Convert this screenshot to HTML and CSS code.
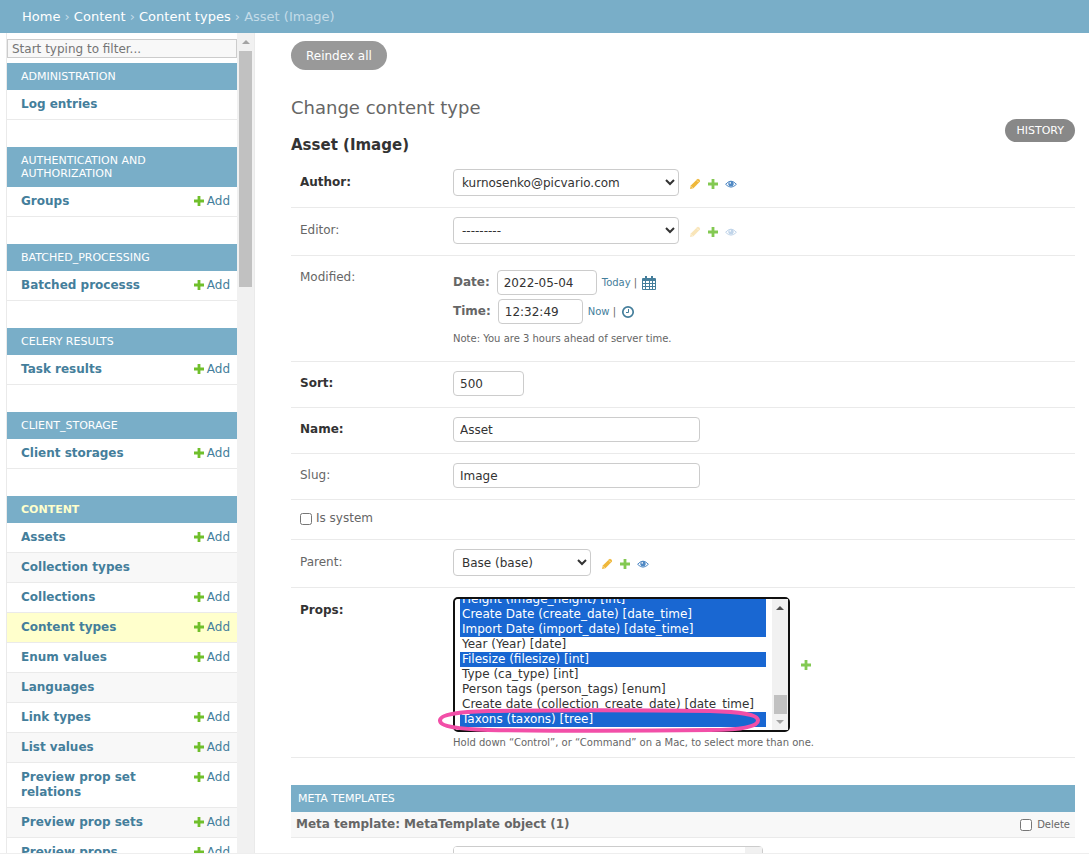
FILE: index.html
```html
<!DOCTYPE html>
<html lang="en">
<head>
    <meta charset="UTF-8">
    <meta name="viewport" content="width=device-width, initial-scale=1.0">
    <title>Asset (Image) | Change content type</title>
    <link rel="stylesheet" href="styles.css">
</head>
<body>
    <!-- Shared icons -->
    <svg class="sprite" aria-hidden="true">
        <symbol id="plus" viewBox="0 0 12 12"><path d="M4.600 1h2.800v3.600H11v2.800H7.400V11H4.600V7.400H1V4.600h3.600z"/></symbol>
        <symbol id="pencil" viewBox="0 0 12 12"><path d="M1 11l.8-3.400L8.200 1.200q.8-.7 1.600 0l1 1q.7.8 0 1.600L4.400 10.200z"/><path d="M2.200 8.400l1.400 1.400M8 2.500L9.600 4.100" stroke="#fff" stroke-width=".6"/></symbol>
        <symbol id="eye" viewBox="0 0 12 12"><path d="M.6 6.300Q6 0 11.400 6.300 6 12 .6 6.300z" fill="none" stroke="currentColor"/><circle cx="6" cy="5.800" r="2.700"/><circle cx="5.200" cy="4.900" r=".8" fill="#fff"/></symbol>
    </svg>

    <div class="breadcrumbs">
        <a href="#">Home</a> › <a href="#">Content</a> › <a href="#">Content types</a> › Asset (Image)
    </div>

    <div class="main">
        <div class="sidebar">
            <nav class="nav-list">
                <input type="search" class="nav-filter" placeholder="Start typing to filter..." aria-label="Filter navigation items">
                <div class="module">
                    <a class="caption" href="#">Administration</a>
                    <div class="row"><a class="model" href="#">Log entries</a></div>
                </div>
                <div class="module">
                    <a class="caption" href="#">Authentication and Authorization</a>
                    <div class="row"><a class="model" href="#">Groups</a><a class="add" href="#"><svg class="icon"><use href="#plus"/></svg>Add</a></div>
                </div>
                <div class="module">
                    <a class="caption" href="#">Batched_Processing</a>
                    <div class="row"><a class="model" href="#">Batched processs</a><a class="add" href="#"><svg class="icon"><use href="#plus"/></svg>Add</a></div>
                </div>
                <div class="module">
                    <a class="caption" href="#">Celery Results</a>
                    <div class="row"><a class="model" href="#">Task results</a><a class="add" href="#"><svg class="icon"><use href="#plus"/></svg>Add</a></div>
                </div>
                <div class="module">
                    <a class="caption" href="#">Client_Storage</a>
                    <div class="row"><a class="model" href="#">Client storages</a><a class="add" href="#"><svg class="icon"><use href="#plus"/></svg>Add</a></div>
                </div>
                <div class="module">
                    <a class="caption current-app" href="#">Content</a>
                    <div class="row"><a class="model" href="#">Assets</a><a class="add" href="#"><svg class="icon"><use href="#plus"/></svg>Add</a></div>
                    <div class="row alt"><a class="model" href="#">Collection types</a></div>
                    <div class="row"><a class="model" href="#">Collections</a><a class="add" href="#"><svg class="icon"><use href="#plus"/></svg>Add</a></div>
                    <div class="row current"><a class="model" href="#">Content types</a><a class="add" href="#"><svg class="icon"><use href="#plus"/></svg>Add</a></div>
                    <div class="row"><a class="model" href="#">Enum values</a><a class="add" href="#"><svg class="icon"><use href="#plus"/></svg>Add</a></div>
                    <div class="row alt"><a class="model" href="#">Languages</a></div>
                    <div class="row"><a class="model" href="#">Link types</a><a class="add" href="#"><svg class="icon"><use href="#plus"/></svg>Add</a></div>
                    <div class="row alt"><a class="model" href="#">List values</a><a class="add" href="#"><svg class="icon"><use href="#plus"/></svg>Add</a></div>
                    <div class="row"><a class="model" href="#">Preview prop set relations</a><a class="add" href="#"><svg class="icon"><use href="#plus"/></svg>Add</a></div>
                    <div class="row alt"><a class="model" href="#">Preview prop sets</a><a class="add" href="#"><svg class="icon"><use href="#plus"/></svg>Add</a></div>
                    <div class="row"><a class="model" href="#">Preview props</a><a class="add" href="#"><svg class="icon"><use href="#plus"/></svg>Add</a></div>
                </div>
            </nav>
            <div class="scrollbar">
                <span class="arrow-up"></span>
                <span class="thumb"></span>
            </div>
        </div>

        <div class="content">
            <button type="button" class="reindex">Reindex all</button>
            <h1>Change content type</h1>
            <div class="title-row">
                <h2>Asset (Image)</h2>
                <a class="history" href="#">History</a>
            </div>

            <form>
                <div class="form-row">
                    <label class="required" for="author">Author:</label>
                    <select id="author" class="wide"><option>kurnosenko@picvario.com</option></select>
                    <div class="related">
                        <a href="#" class="change" aria-label="Change author"><svg class="icon"><use href="#pencil"/></svg></a>
                        <a href="#" class="plus" aria-label="Add author"><svg class="icon"><use href="#plus"/></svg></a>
                        <a href="#" class="view" aria-label="View author"><svg class="icon"><use href="#eye"/></svg></a>
                    </div>
                </div>
                <div class="form-row">
                    <label for="editor">Editor:</label>
                    <select id="editor" class="wide"><option>---------</option></select>
                    <div class="related">
                        <a class="change disabled" aria-label="Change editor"><svg class="icon"><use href="#pencil"/></svg></a>
                        <a href="#" class="plus" aria-label="Add editor"><svg class="icon"><use href="#plus"/></svg></a>
                        <a class="view disabled" aria-label="View editor"><svg class="icon"><use href="#eye"/></svg></a>
                    </div>
                </div>
                <div class="form-row modified">
                    <span class="label">Modified:</span>
                    <div class="datetime">
                        <div class="line">
                            <label for="date">Date:</label>
                            <input type="text" id="date" class="date" value="2022-05-04">
                            <span class="shortcuts"><a href="#">Today</a> | </span>
                            <a href="#" aria-label="Choose a date"><svg class="picker" viewBox="0 0 14 14"><path fill="currentColor" fill-rule="evenodd" d="M1 2h2V0h2v2h4V0h2v2h2q1 0 1 1v10q0 1-1 1H1q-1 0-1-1V3q0-1 1-1zm0 3v2h2V5zm3 0v2h3V5zm4 0v2h2V5zm3 0v2h2V5zM1 8v2h2V8zm3 0v2h3V8zm4 0v2h2V8zm3 0v2h2V8zM1 11v2h2v-2zm3 0v2h3v-2zm4 0v2h2v-2zm3 0v2h2v-2z"/></svg></a>
                        </div>
                        <div class="line">
                            <label for="time">Time:</label>
                            <input type="text" id="time" class="time" value="12:32:49">
                            <span class="shortcuts"><a href="#">Now</a> | </span>
                            <a href="#" aria-label="Choose a time"><svg class="picker" viewBox="0 0 14 14" fill="none" stroke="currentColor"><circle cx="7" cy="7" r="5.200" stroke-width="1.700"/><path d="M7.500 4v3.500H5"/></svg></a>
                        </div>
                        <div class="help">Note: You are 3 hours ahead of server time.</div>
                    </div>
                </div>
                <div class="form-row">
                    <label class="required" for="sort">Sort:</label>
                    <input type="text" id="sort" class="short" value="500">
                </div>
                <div class="form-row">
                    <label class="required" for="name">Name:</label>
                    <input type="text" id="name" class="long" value="Asset">
                </div>
                <div class="form-row">
                    <label for="slug">Slug:</label>
                    <input type="text" id="slug" class="long" value="Image">
                </div>
                <div class="form-row checkbox-row">
                    <input type="checkbox" id="is_system">
                    <label for="is_system">Is system</label>
                </div>
                <div class="form-row">
                    <label for="parent">Parent:</label>
                    <select id="parent" class="medium"><option>Base (base)</option></select>
                    <div class="related">
                        <a href="#" class="change" aria-label="Change parent"><svg class="icon"><use href="#pencil"/></svg></a>
                        <a href="#" class="plus" aria-label="Add parent"><svg class="icon"><use href="#plus"/></svg></a>
                        <a href="#" class="view" aria-label="View parent"><svg class="icon"><use href="#eye"/></svg></a>
                    </div>
                </div>
                <div class="form-row props">
                    <label class="required" for="props">Props:</label>
                    <div>
                        <div class="props-line">
                            <div class="listbox">
                                <select id="props" multiple>
                                    <option selected>Height (image_height) [int]</option>
                                    <option selected>Create Date (create_date) [date_time]</option>
                                    <option selected>Import Date (import_date) [date_time]</option>
                                    <option>Year (Year) [date]</option>
                                    <option selected>Filesize (filesize) [int]</option>
                                    <option>Type (ca_type) [int]</option>
                                    <option>Person tags (person_tags) [enum]</option>
                                    <option>Create date (collection_create_date) [date_time]</option>
                                    <option selected>Taxons (taxons) [tree]</option>
                                </select>
                                <div class="scrollbar">
                                    <span class="arrow-up"></span>
                                    <span class="thumb"></span>
                                    <span class="arrow-down"></span>
                                </div>
                                <svg class="marker" viewBox="0 0 322 25"><path d="M50 3C22 4 2 6 2 12.500S22 21 50 22c70 1 150 1 222 0 30 0 48-3 48-9.500S302 4 272 3C200 2 120 2 50 3z"/></svg>
                            </div>
                            <a href="#" class="plus" aria-label="Add prop"><svg class="icon"><use href="#plus"/></svg></a>
                        </div>
                        <div class="help">Hold down “Control”, or “Command” on a Mac, to select more than one.</div>
                    </div>
                </div>

                <div class="inline-group">
                    <h3>Meta templates</h3>
                    <div class="inline-title">
                        <b>Meta template: MetaTemplate object (1)</b>
                        <span class="delete"><input type="checkbox" id="delete"><label for="delete">Delete</label></span>
                    </div>
                    <div class="inline-list">
                        <select multiple aria-label="Meta template props"></select>
                        <div class="scrollbar"></div>
                    </div>
                </div>
            </form>
        </div>
    </div>

    <script>
        // Show the end of the props list
        const props = document.getElementById('props');
        props.scrollTop = props.scrollHeight;
    </script>
</body>
</html>
```
FILE: styles.css
```css
* {
    box-sizing: border-box;
}
body {
    margin: 0;
    height: 100vh;
    overflow: hidden;
    display: flex;
    flex-direction: column;
    font-family: "DejaVu Sans", Verdana, sans-serif;
    font-size: 12px;
    line-height: 15px;
    color: #666;
    background: #fff;
    border-bottom: 1px solid #eee;
}
a {
    color: #447e9b;
    text-decoration: none;
}
input, select, button {
    font-family: inherit;
    font-size: 12px;
    color: #333;
    margin: 0;
}
.sprite {
    position: absolute;
    width: 0;
    height: 0;
}
.icon {
    display: block;
    width: 12px;
    height: 12px;
    fill: currentColor;
}
.breadcrumbs {
    flex: none;
    padding: 9px 22px;
    background: #79aec8;
    color: #c4dce8;
    font-size: 13px;
}
.breadcrumbs a {
    color: #fff;
}
.main {
    flex: 1;
    display: flex;
    min-height: 0;
}

/* Sidebar */
.sidebar {
    flex: 0 0 249px;
    margin-left: 6px;
    display: flex;
    overflow: hidden;
    border-left: 1px solid #eaeaea;
    border-right: 1px solid #eaeaea;
}
.nav-list {
    flex: 1;
    padding-top: 6px;
}
.nav-filter {
    display: block;
    width: 100%;
    height: 19px;
    margin-bottom: 5px;
    padding: 0 4px;
    border: 1px solid #ccc;
    background: #f8f8f8;
    appearance: none;
}
.nav-filter::placeholder {
    color: #757575;
}
.module {
    margin-bottom: 27px;
}
.caption {
    display: block;
    padding: 7px 14px;
    background: #79aec8;
    color: #fff;
    font-size: 11px;
    line-height: 13px;
    text-transform: uppercase;
}
.current-app {
    color: #ffc;
    font-weight: bold;
}
.row {
    display: flex;
    justify-content: space-between;
    padding: 7px 7px 7px 14px;
    border-bottom: 1px solid #eaeaea;
}
.row.alt {
    background: #f8f8f8;
}
.row.current {
    background: #ffc;
}
.model {
    font-weight: bold;
    max-width: 130px;
}
.add {
    display: flex;
    gap: 2px;
}
.add .icon {
    color: #70bf2b;
    margin-top: 1px;
}

/* Scrollbars */
.scrollbar {
    flex: 0 0 17px;
    display: flex;
    flex-direction: column;
    align-items: center;
    background: #f1f1f1;
}
.thumb {
    width: 13px;
    background: #c1c1c1;
}
.arrow-up, .arrow-down {
    border: 4px solid transparent;
}
.arrow-up {
    border-top: 0;
    border-bottom-color: #a3a3a3;
    margin: 7px 0;
}
.arrow-down {
    border-bottom: 0;
    border-top-color: #a3a3a3;
    margin: 6px 0;
}
.sidebar .thumb {
    height: 236px;
}

/* Content */
.content {
    flex: 1;
    min-width: 0;
    padding: 8px 14px 0 36px;
    overflow: hidden;
}
.reindex {
    display: block;
    height: 29px;
    padding: 0 15px;
    border: 0;
    border-radius: 15px;
    background: #999;
    color: #fff;
}
h1 {
    margin: 27px 0 0;
    font-size: 18px;
    line-height: 22px;
    font-weight: normal;
}
.title-row {
    display: flex;
    justify-content: space-between;
    height: 41px;
}
h2 {
    margin: 17px 0 0;
    font-size: 15px;
    line-height: 18px;
    color: #333;
}
.history {
    height: 23px;
    padding: 0 11px;
    border-radius: 12px;
    background: #888;
    color: #fff;
    font-size: 11px;
    line-height: 24px;
    text-transform: uppercase;
}
.form-row {
    display: flex;
    align-items: center;
    padding: 9px 9px 11px;
    border-bottom: 1px solid #eaeaea;
}
.form-row > label, .form-row > .label {
    flex: 0 0 153px;
}
.form-row > .required {
    font-weight: bold;
    color: #333;
}
.form-row select {
    height: 27px;
    padding: 0 4px;
    border: 1px solid #ccc;
    border-radius: 4px;
    background-color: #fff;
}
.form-row input[type="text"] {
    height: 25px;
    padding: 0 6px;
    border: 1px solid #ccc;
    border-radius: 4px;
}
.wide {
    width: 226px;
}
.medium {
    width: 138px;
}
.form-row .short {
    width: 71px;
}
.form-row .long {
    width: 247px;
}
.related {
    display: flex;
    gap: 6px;
    margin-left: 10px;
    padding-top: 2px;
}
.change {
    color: #efb739;
}
.plus {
    color: #83c952;
}
.view {
    color: #5089c4;
}
.disabled {
    opacity: .35;
}
.modified {
    align-items: flex-start;
    padding-top: 14px;
    padding-bottom: 15px;
}
.datetime {
    display: flex;
    flex-direction: column;
    gap: 4px;
}
.line {
    display: flex;
    align-items: center;
    gap: 5px;
}
.line label {
    font-weight: bold;
    margin-right: 2px;
}
.form-row .date {
    width: 100px;
}
.form-row .time {
    width: 85px;
}
.shortcuts {
    font-size: 10px;
}
.picker {
    display: block;
    width: 14px;
    height: 14px;
}
.help {
    padding-top: 3px;
    font-size: 10px;
}
.checkbox-row {
    padding-top: 11px;
    padding-bottom: 13px;
}
.checkbox-row input {
    width: 12px;
    height: 12px;
    margin: 0 4px 0 0;
}
.checkbox-row > label {
    flex: none;
}

/* Props list */
.props {
    align-items: flex-start;
    padding-bottom: 7px;
}
.props > label {
    margin-top: 6px;
}
.props-line {
    display: flex;
    align-items: center;
    gap: 10px;
}
.listbox {
    position: relative;
    display: flex;
    width: 337px;
    height: 135px;
    border: 2px solid #101010;
    border-radius: 5px;
}
.form-row .listbox select {
    flex: 1;
    min-width: 0;
    height: 131px;
    padding: 0 6px 3px 5px;
    border: 0;
    outline: 0;
    overflow-y: scroll;
    scrollbar-width: none;
}
.listbox option {
    height: 15px;
    min-height: 15px;
    padding: 0 2px;
    line-height: 15px;
}
.listbox option:checked {
    background: #1967d2 linear-gradient(#1967d2, #1967d2);
    color: #fff;
}
.listbox .scrollbar {
    flex-basis: 16px;
}
.listbox .arrow-up {
    border-bottom-color: #505050;
}
.listbox .thumb {
    height: 19px;
    margin-top: auto;
}
.marker {
    position: absolute;
    left: -17px;
    bottom: -3px;
    width: 322px;
    height: 25px;
    fill: none;
    stroke: #f24fa8;
    stroke-width: 4;
    overflow: visible;
    pointer-events: none;
}

/* Inlines */
.inline-group {
    margin-top: 27px;
}
h3 {
    margin: 0;
    padding: 7px;
    background: #79aec8;
    color: #fff;
    font-size: 11px;
    font-weight: normal;
    line-height: 13px;
    text-transform: uppercase;
}
.inline-title {
    display: flex;
    justify-content: space-between;
    align-items: center;
    padding: 5px;
    background: #f8f8f8;
    border-bottom: 1px solid #eaeaea;
}
.delete {
    display: flex;
    align-items: center;
    gap: 5px;
    font-size: 10px;
}
.delete input {
    width: 12px;
    height: 12px;
}
.inline-list {
    display: flex;
    width: 310px;
    height: 135px;
    margin: 8px 0 0 162px;
    border: 1px solid #ccc;
    border-radius: 4px;
}
.inline-list select {
    flex: 1;
    border: 0;
    scrollbar-width: none;
}
```
